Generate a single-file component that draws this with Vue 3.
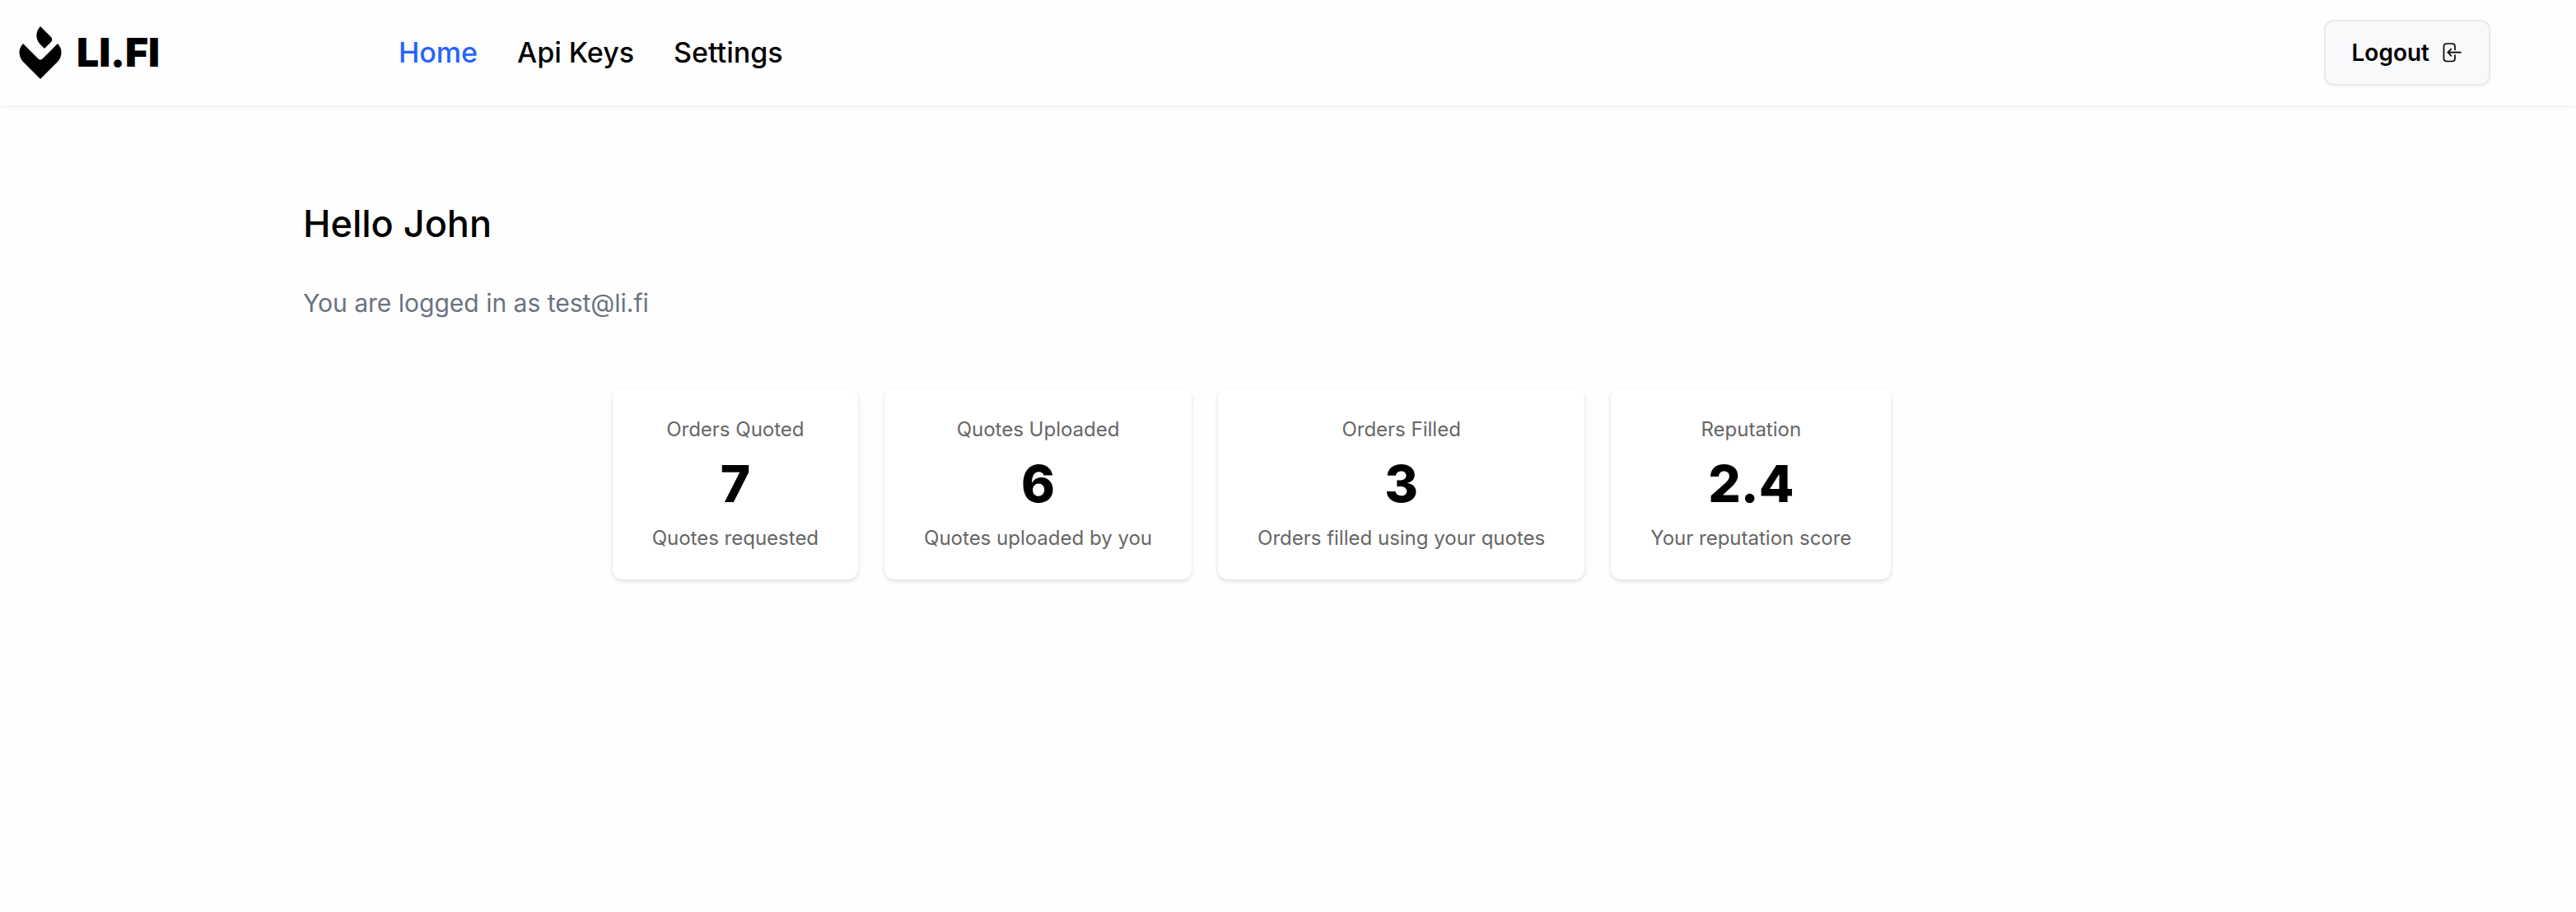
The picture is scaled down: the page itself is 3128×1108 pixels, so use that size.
<script setup>
const links = [
  { label: 'Home', href: '#home', active: true },
  { label: 'Api Keys', href: '#api-keys', active: false },
  { label: 'Settings', href: '#settings', active: false }
]

const stats = [
  { title: 'Orders Quoted', value: '7', desc: 'Quotes requested' },
  { title: 'Quotes Uploaded', value: '6', desc: 'Quotes uploaded by you' },
  { title: 'Orders Filled', value: '3', desc: 'Orders filled using your quotes' },
  { title: 'Reputation', value: '2.4', desc: 'Your reputation score' }
]
</script>

<template>
  <div class="page">
    <header class="topbar">
      <a class="brand" href="#home">
        <svg class="mark" viewBox="0 0 52 64" width="52" height="64" aria-hidden="true">
          <path d="M26 0 L39 13 Q41.500 16 39 19 L31 27 L25 21 C20 15 20 6 26 0 Z" />
          <path d="M5 21 L23 39 Q26 42 29 39 L47 21 C53 27 53 36 47 43 L26 64 L5 43 C-1 36 -1 27 5 21 Z" />
        </svg>
        <span class="wordmark">LI.FI</span>
      </a>
      <nav class="nav">
        <a
          v-for="link in links"
          :key="link.label"
          :href="link.href"
          class="nav-link"
          :class="{ active: link.active }"
        >{{ link.label }}</a>
      </nav>
      <button class="logout" type="button">
        Logout
        <svg viewBox="0 0 24 24" width="24" height="24" aria-hidden="true">
          <path d="M15 8.500 V4.500 Q15 1 11.500 1 H5 Q1.500 1 1.500 4.500 V19 Q1.500 22.500 5 22.500 H11.500 Q15 22.500 15 19 V15" />
          <path d="M22 11.700 H6.500 M10.500 7.500 L6.300 11.700 L10.500 15.900" />
        </svg>
      </button>
    </header>

    <main class="content">
      <h1>Hello John</h1>
      <p class="lead">You are logged in as test@li.fi</p>
      <section class="stats" aria-label="Statistics">
        <article v-for="stat in stats" :key="stat.title" class="stat">
          <h2 class="stat-title">{{ stat.title }}</h2>
          <p class="stat-value">{{ stat.value }}</p>
          <p class="stat-desc">{{ stat.desc }}</p>
        </article>
      </section>
    </main>
  </div>
</template>

<style>
body {
  background: #fefefe;
}
</style>

<style scoped>
.page {
  min-height: 100vh;
  background: #fefefe;
  color: #000;
  font-family: Inter, "Liberation Sans", sans-serif;
}

h1,
h2,
p {
  margin: 0;
}

.topbar {
  display: flex;
  align-items: center;
  box-sizing: border-box;
  height: 128px;
  padding: 0 104px 0 23px;
  box-shadow: 0 2px 6px rgba(0, 0, 0, 0.06);
}

.brand {
  display: flex;
  align-items: center;
  gap: 18px;
  width: 461px;
  color: #000;
  text-decoration: none;
}

.mark {
  flex: none;
  fill: #000;
}

.wordmark {
  font-size: 48px;
  font-weight: 900;
  line-height: 64px;
}

.nav {
  display: flex;
  gap: 48px;
}

.nav-link {
  color: #000;
  font-size: 34px;
  font-weight: 500;
  line-height: 48px;
  text-decoration: none;
}

.nav-link.active {
  color: #2563ff;
}

.logout {
  display: flex;
  align-items: center;
  gap: 16px;
  box-sizing: border-box;
  height: 80px;
  margin-left: auto;
  padding: 0 32px;
  border: 2px solid #e8eaea;
  border-radius: 12px;
  background: #f8f9fb;
  box-shadow: 0 2px 4px rgba(0, 0, 0, 0.03);
  color: #000;
  font: inherit;
  font-size: 28px;
  font-weight: 600;
  line-height: 40px;
}

.logout svg {
  fill: none;
  stroke: #000;
  stroke-width: 1.7;
  stroke-linecap: round;
  stroke-linejoin: round;
}

.content {
  padding: 112px 456px 64px 368px;
}

h1 {
  font-size: 45px;
  font-weight: 500;
  line-height: 64px;
}

.lead {
  margin-top: 40px;
  color: #6b7280;
  font-size: 30px;
  line-height: 48px;
}

.stats {
  display: flex;
  flex-wrap: wrap;
  justify-content: center;
  gap: 32px;
  margin-top: 80px;
}

.stat {
  padding: 32px 48px;
  border-radius: 12px;
  background: #fff;
  box-shadow: 0 2px 4px rgba(0, 0, 0, 0.1), 0 2px 8px rgba(0, 0, 0, 0.04);
  text-align: center;
}

.stat-title,
.stat-desc {
  color: #666;
  font-size: 24px;
  font-weight: 400;
  line-height: 36px;
}

.stat-value {
  font-size: 62px;
  font-weight: 800;
  line-height: 96px;
}
</style>
